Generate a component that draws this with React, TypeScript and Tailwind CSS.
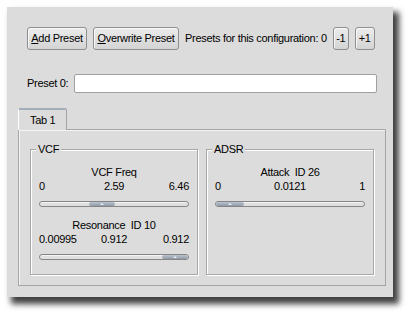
import React from "react";

const font = { fontFamily: '"Liberation Sans", Arial, sans-serif' };

function Btn({ children, w }: { children: React.ReactNode; w: string }) {
  return (
    <div
      className={`${w} h-[23px] flex items-center justify-center rounded-[3px] border border-[#8e8e8e] bg-gradient-to-b from-[#ececec] to-[#d4d4d4] shadow-[inset_1px_1px_0_#f8f8f8] text-black`}
    >
      {children}
    </div>
  );
}

function Slider({ pos, hw = 26 }: { pos: number; hw?: number }) {
  return (
    <div className="relative h-[6px] w-full rounded-full border border-[#858585] bg-[#e0e0e0] shadow-[inset_0_1px_0_#f4f4f4] overflow-hidden">
      <div
        className="absolute top-0 bottom-0 rounded-[2px] bg-gradient-to-b from-[#bcc4ce] to-[#8f99a8] flex items-center justify-center"
        style={{ left: `calc((100% - ${hw}px) * ${pos})`, width: hw }}
      >
        <div className="w-0 h-0 border-l-[2px] border-r-[2px] border-b-[2px] border-l-transparent border-r-transparent border-b-[#e8ecf0]" />
      </div>
    </div>
  );
}

function Param({
  label,
  min,
  val,
  max,
  pos,
  hw,
}: {
  label: string;
  min: string;
  val: string;
  max: string;
  pos: number;
  hw?: number;
}) {
  return (
    <div className="flex flex-col">
      <div className="h-[14px] leading-[14px] text-center whitespace-pre">{label}</div>
      <div className="grid grid-cols-3 h-[14px] leading-[14px]">
        <div className="text-left">{min}</div>
        <div className="text-center">{val}</div>
        <div className="text-right">{max}</div>
      </div>
      <div className="mt-[8px]">
        <Slider pos={pos} hw={hw} />
      </div>
    </div>
  );
}

function Group({ title, children }: { title: string; children: React.ReactNode }) {
  return (
    <div className="relative w-[168px] h-[126px] border border-[#a8a8a8] shadow-[inset_1px_1px_0_#ffffff,1px_1px_0_#ffffff]">
      <div className="absolute -top-[8px] left-[5px] px-[2px] h-[14px] leading-[14px] bg-[#dcdcdc]">{title}</div>
      <div className="px-[8px] pt-[15px] flex flex-col gap-[11px]">{children}</div>
    </div>
  );
}

export default function App() {
  return (
    <div className="bg-white w-[417px] h-[320px] p-[7px] text-black" style={font}>
      <div className="w-[386px] h-[290px] bg-[#dcdcdc] shadow-[5px_6px_6px_1px_rgba(0,0,0,0.75)] text-[11px] tracking-[-0.3px] flex flex-col">
        <div className="mt-[20px] ml-[20px] flex items-center gap-[6px] h-[23px]">
          <Btn w="w-[60px]">
            <span>
              <span className="underline">A</span>dd Preset
            </span>
          </Btn>
          <Btn w="w-[86px]">
            <span>
              <span className="underline">O</span>verwrite Preset
            </span>
          </Btn>
          <span className="whitespace-pre">Presets for this configuration: 0</span>
          <Btn w="w-[16px]">
            <span className="text-black">-1</span>
          </Btn>
          <Btn w="w-[20px]">+1</Btn>
        </div>
        <div className="mt-[24px] ml-[20px] flex items-center h-[19px]">
          <span className="w-[47px] whitespace-pre">Preset 0:</span>
          <div className="w-[303px] h-[19px] bg-white border border-[#a0a0a0] rounded-[2px]" />
        </div>
        <div className="mt-[15px] ml-[11px] w-[368px] flex flex-col">
          <div className="flex">
            <div className="relative z-10 -mb-px w-[49px] h-[22px] bg-[#dcdcdc] border-t-[2px] border-t-[#a3acb9] border-l border-l-white border-r border-r-[#a5a5a5] rounded-tl-[2px] rounded-tr-[2px] flex items-center pl-[11px]">
              Tab 1
            </div>
          </div>
          <div className="h-[157px] border border-[#a5a5a5] shadow-[inset_1px_1px_0_#f4f4f4] pl-[11px] pt-[19px] flex gap-[8px]">
            <Group title="VCF">
              <Param label="VCF Freq" min="0" val="2.59" max="6.46" pos={0.4} />
              <Param label="Resonance  ID 10" min="0.00995" val="0.912" max="0.912" pos={1} />
            </Group>
            <Group title="ADSR">
              <Param label="Attack  ID 26" min="0" val="0.0121" max="1" pos={0} hw={28} />
            </Group>
          </div>
        </div>
      </div>
    </div>
  );
}
